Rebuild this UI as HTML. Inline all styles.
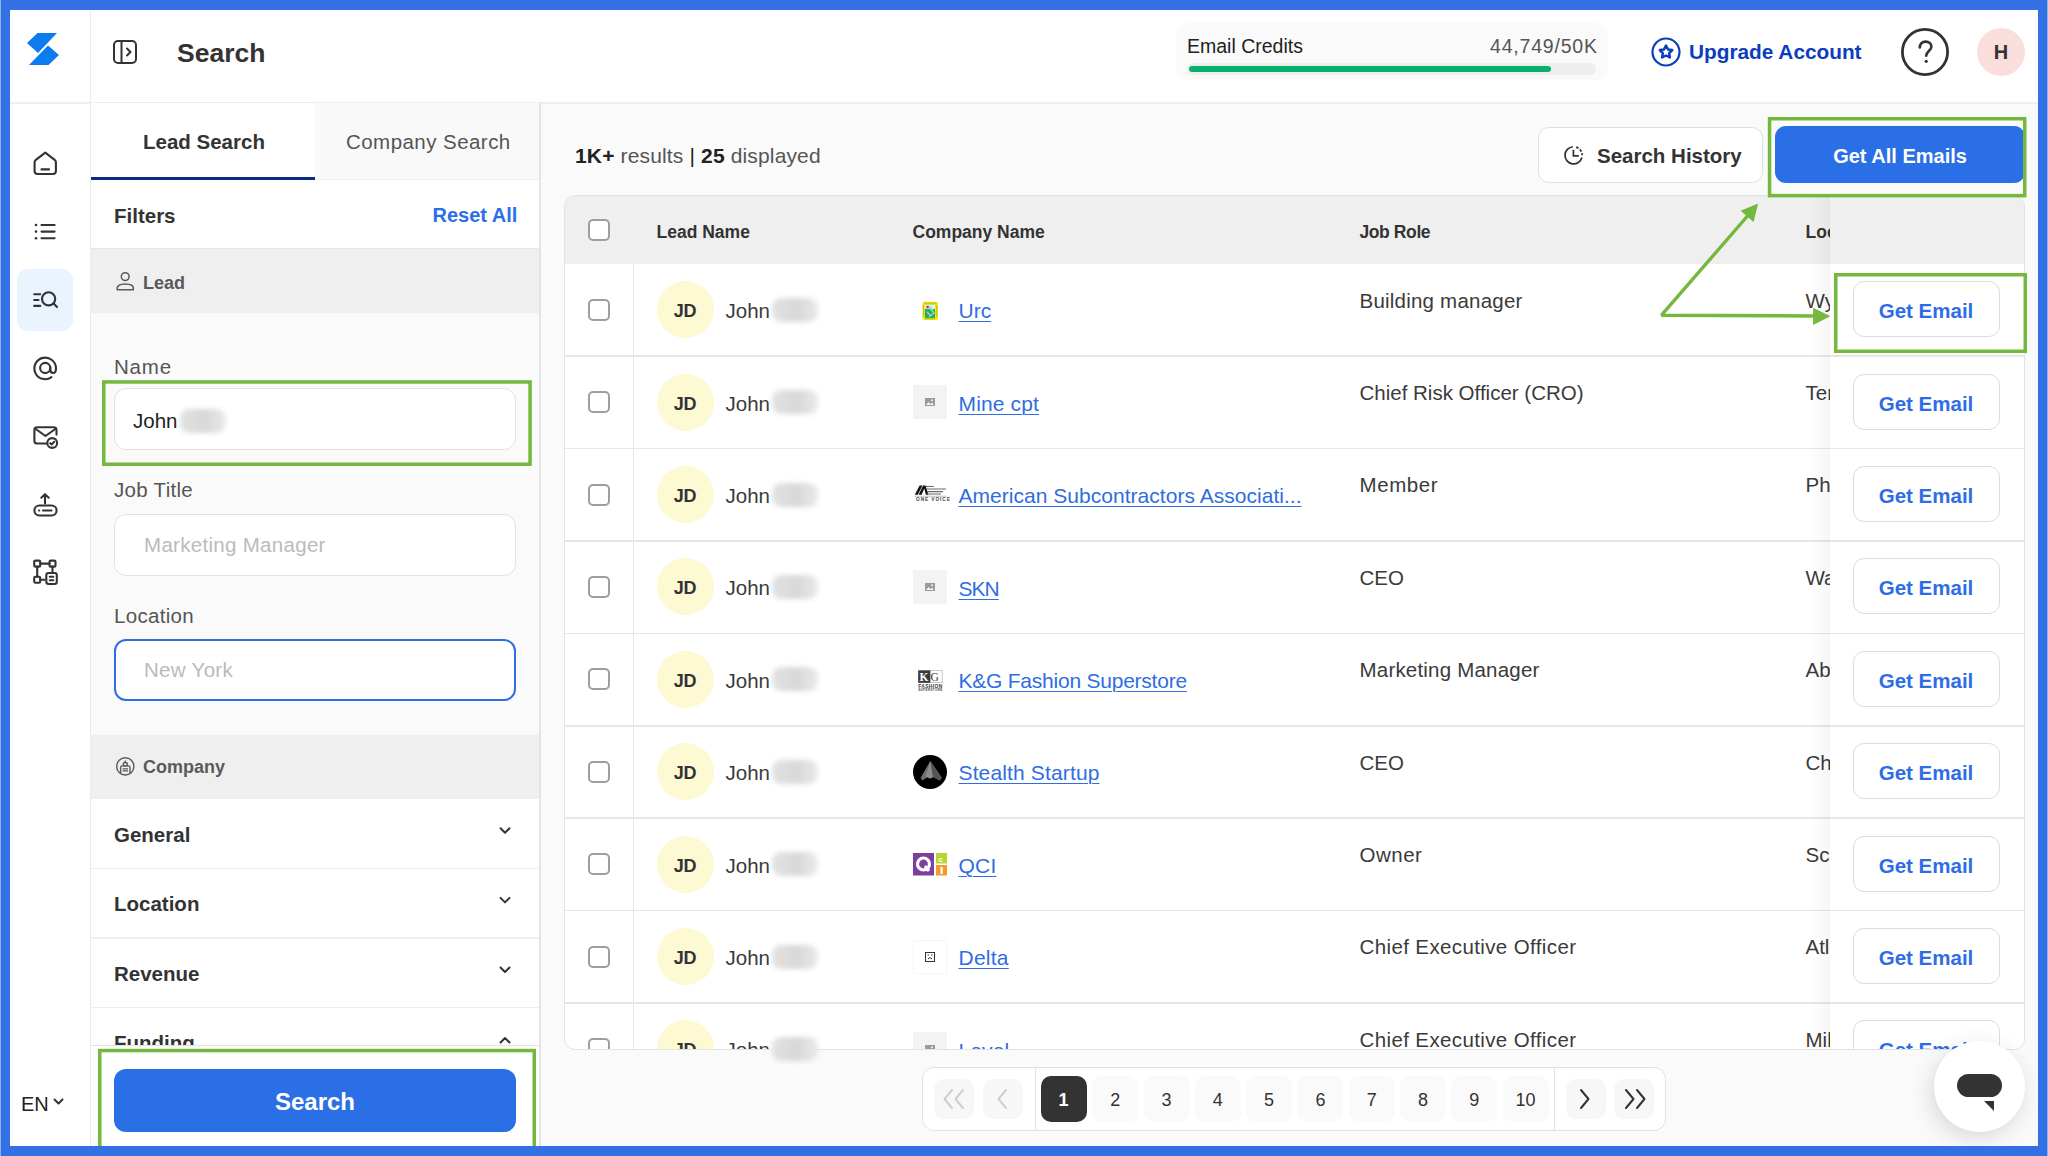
<!DOCTYPE html>
<html><head><meta charset="utf-8">
<style>
*{box-sizing:border-box;margin:0;padding:0}
html,body{width:2048px;height:1156px;overflow:hidden}
body{background:#3370E3;font-family:"Liberation Sans",sans-serif;color:#333;position:relative}
.a{position:absolute}
.t{position:absolute;white-space:nowrap;line-height:1}
.b{font-weight:bold}
svg{position:absolute;overflow:visible}
.chk{position:absolute;width:22px;height:22px;border:2px solid #9E9E9E;border-radius:5px;background:#fff}
.av{position:absolute;width:57px;height:57px;border-radius:50%;background:#FDF9D3;font-weight:bold;font-size:18px;letter-spacing:-0.3px;color:#333;text-align:center;line-height:60px}
.nm{position:absolute;font-size:20.5px;color:#3A3A3A;white-space:nowrap;line-height:1}
.blur{position:absolute;width:40px;height:20px;border-radius:9px;background:linear-gradient(to right,#E2E2E2,#D8D8D8 55%,#EAEAEA);filter:blur(2.8px)}
.lk{position:absolute;font-size:21px;letter-spacing:0.25px;color:#2F6DE1;text-decoration:underline;text-underline-offset:2.5px;text-decoration-thickness:1.2px;white-space:nowrap;line-height:1}
.jr{position:absolute;font-size:20.5px;letter-spacing:0.25px;color:#3A3A3A;white-space:nowrap;line-height:1}
.lc{position:absolute;font-size:20.5px;color:#3A3A3A;white-space:nowrap;line-height:1}
.ge{position:absolute;left:1853px;width:147px;height:56px;border:1.5px solid #DCDCDC;border-radius:11px;background:#fff;color:#2F6DE6;font-weight:bold;font-size:20.5px;text-align:center;line-height:58px}
.sep{position:absolute;left:564px;width:1460px;height:1px;background:#E3E3E3}
.lg{position:absolute;left:913px;width:34px;height:34px}
.pg{position:absolute;top:1076px;width:46px;height:46px;border-radius:10px;background:#FAFAFA;font-size:18px;color:#333;text-align:center;line-height:48px}
.gr{position:absolute;border:3px solid #76B83F}
.acc{position:absolute;left:91px;width:448px;height:70px;background:#fff}
.acc .t{left:23px;top:26px !important;font-size:20.5px;font-weight:bold;color:#333}
</style></head>
<body>
<!-- white app area -->
<div class="a" style="left:10px;top:10px;width:2028px;height:1136px;background:#fff"></div>
<!-- main bg -->
<div class="a" style="left:540px;top:103px;width:1498px;height:1043px;background:#FAFAFA"></div>
<!-- header border -->
<div class="a" style="left:10px;top:102px;width:2028px;height:1.5px;background:#EEEEEE"></div>
<!-- nav divider -->
<div class="a" style="left:90px;top:10px;width:1px;height:1136px;background:#EBEBEB"></div>

<!-- NAV -->
<svg style="left:27px;top:33px" width="32" height="32" viewBox="0 0 32 32"><path d="M10.5 0H30L11 20L0 10Z M21 12.5L32 22L21.5 32H2Z" fill="#0A7CF0"/></svg>
<div class="a" style="left:17px;top:269px;width:56px;height:62px;border-radius:11px;background:#EAF4FE"></div>


<!-- nav icons -->
<svg style="left:0;top:0" width="100" height="600" viewBox="0 0 100 600" fill="none" stroke="#333" stroke-width="2.1" stroke-linecap="round" stroke-linejoin="round">
<path d="M45.3 152.6L55 160.2Q55.9 161 55.9 162.3V171Q55.9 174 52.9 174H37.6Q34.6 174 34.6 171V162.3Q34.6 161 35.5 160.2Z"/>
<path d="M41.5 169.4H49"/>
<circle cx="36" cy="225" r="1.3" fill="#333" stroke="none"/><circle cx="36" cy="231.6" r="1.3" fill="#333" stroke="none"/><circle cx="36" cy="238.3" r="1.3" fill="#333" stroke="none"/>
<path d="M41.5 225H54.6M41.5 231.6H54.6M41.5 238.3H54.6"/>
<path d="M34.2 294.3H40.2M34.2 300H38.5M34.2 305.9H40.2"/>
<circle cx="48.6" cy="298.8" r="6.6"/><path d="M53.6 303.6L57 307"/>
<path d="M50.3 367.5V369.5Q50.3 373 53.3 373Q56 373 56 368.3A10.8 10.8 0 1 0 51.5 377.2"/>
<circle cx="45.2" cy="368" r="5.1"/>
<path d="M56.5 434.6V430Q56.5 427.2 53.7 427.2H37.2Q34.4 427.2 34.4 430V441Q34.4 443.5 37 443.5H46.5"/>
<path d="M35 428.5L45.5 436L56 428.5"/>
<circle cx="52.2" cy="443" r="4.9"/><path d="M50.2 443.2L51.7 444.5L54.2 441.8"/>
<path d="M45 503.5V494.2M41.3 497.7L45 494.2L48.7 497.7"/>
<rect x="34.4" y="505.5" width="22.2" height="10" rx="5"/>
<path d="M39 510.5H39.2M43 510.5H51.5"/>
<rect x="34.2" y="560.6" width="6" height="6" rx="1.2"/><rect x="49.5" y="560.6" width="6" height="6" rx="1.2"/>
<path d="M40.2 563.6H49.5M37.2 566.6V576.8M52.5 566.6V572.5"/>
<rect x="34.2" y="576.8" width="6" height="6" rx="1.2"/>
<rect x="46.3" y="573" width="10.5" height="11" rx="2.2"/>
<path d="M49.8 576.8H53.3M49.8 580.2H53.3M40.2 579.8H44.5"/>
</svg>


<!-- FILTER PANEL -->
<div class="a" style="left:91px;top:103px;width:448px;height:1043px;background:#FAFAFA"></div>
<div class="a" style="left:539px;top:103px;width:1.5px;height:1043px;background:#E4E4E4"></div>
<div class="a" style="left:91px;top:103px;width:224px;height:77px;background:#fff"></div>
<div class="a" style="left:315px;top:103px;width:224px;height:77px;background:#F9F9F9;border-bottom:1.5px solid #EEEEEE"></div>
<div class="a" style="left:91px;top:177px;width:224px;height:3px;background:#0B2A7A"></div>
<div class="t b" style="left:143px;top:132px;font-size:20.5px;color:#333">Lead Search</div>
<div class="t" style="left:346px;top:132px;font-size:20.5px;letter-spacing:0.45px;color:#555">Company Search</div>
<div class="a" style="left:91px;top:180px;width:448px;height:69px;background:#fff;border-bottom:1.5px solid #E6E6E6"></div>
<div class="t b" style="left:114px;top:205.5px;font-size:20.5px;color:#333">Filters</div>
<div class="t b" style="left:432.5px;top:205px;font-size:20px;color:#2A6FE8">Reset All</div>
<div class="a" style="left:91px;top:249px;width:448px;height:64px;background:#EFEFEF"></div>
<svg style="left:115px;top:272px" width="20" height="20" viewBox="0 0 20 20" fill="none" stroke="#5A5A5A" stroke-width="1.5"><circle cx="10.2" cy="4.6" r="3.9"/><path d="M2.3 17.8Q1.2 11.9 10.3 11.9Q19.4 11.9 18.3 17.8Z" stroke-linejoin="round"/></svg>
<div class="t b" style="left:143px;top:273.5px;font-size:18px;color:#5A5A5A">Lead</div>

<div class="t" style="left:114px;top:356.5px;font-size:20.5px;letter-spacing:0.8px;color:#555">Name</div>
<div class="a" style="left:114px;top:388px;width:402px;height:62px;border:1.5px solid #E2E2E2;border-radius:12px;background:#fff"></div>
<div class="t" style="left:133px;top:411px;font-size:20.5px;color:#222">John</div>
<div class="blur" style="left:180px;top:409px;width:46px;height:24px"></div>
<div class="t" style="left:114px;top:480px;font-size:20.5px;letter-spacing:0.3px;color:#555">Job Title</div>
<div class="a" style="left:114px;top:513.5px;width:402px;height:62px;border:1.5px solid #E2E2E2;border-radius:12px;background:#fff"></div>
<div class="t" style="left:144px;top:535.2px;font-size:20.5px;letter-spacing:0.3px;color:#BBBBBB">Marketing Manager</div>
<div class="t" style="left:114px;top:606px;font-size:20.5px;letter-spacing:0.3px;color:#555">Location</div>
<div class="a" style="left:114px;top:638.5px;width:402px;height:62px;border:2px solid #306DE4;border-radius:12px;background:#fff"></div>
<div class="t" style="left:144px;top:660.2px;font-size:20.5px;letter-spacing:0.3px;color:#BBBBBB">New York</div>

<div class="a" style="left:91px;top:735px;width:448px;height:64px;background:#EFEFEF"></div>
<svg style="left:115px;top:757px" width="20" height="20" viewBox="0 0 20 20" fill="none" stroke="#5A5A5A" stroke-width="1.4"><circle cx="10.3" cy="9.4" r="8.6"/><path d="M10.3 3.6V5.6"/><rect x="8.3" y="5.8" width="4" height="3" rx="0.8"/><path d="M5.6 17V10.4Q5.6 8.9 7.1 8.9H13.5Q15 8.9 15 10.4V17"/><path d="M7.6 11.9H13M7.6 13.9H13" stroke-width="1.2"/></svg>
<div class="t b" style="left:143px;top:757.5px;font-size:18px;color:#5A5A5A">Company</div>

<div class="acc" style="top:799px"><div class="t" style="top:27px">General</div></div>
<div class="acc" style="top:868px"><div class="t" style="top:27px">Location</div></div>
<div class="acc" style="top:938px"><div class="t" style="top:27px">Revenue</div></div>
<div class="acc" style="top:1007px"><div class="t" style="top:27px">Funding</div></div>
<div class="a" style="left:91px;top:867.5px;width:448px;height:1.5px;background:#EEEEEE"></div><div class="a" style="left:91px;top:937px;width:448px;height:1.5px;background:#EEEEEE"></div><div class="a" style="left:91px;top:1006.5px;width:448px;height:1.5px;background:#EEEEEE"></div>
<svg style="left:0;top:0" width="540" height="1100" viewBox="0 0 540 1100" fill="none" stroke="#333" stroke-width="2" stroke-linecap="round" stroke-linejoin="round">
<path d="M500.5 828.3L505 832.8L509.5 828.3M500.5 897.9L505 902.4L509.5 897.9M500.5 967.5L505 972L509.5 967.5M500.5 1042.5L505 1038L509.5 1042.5"/>
</svg>
<!-- footer -->
<div class="a" style="left:91px;top:1045px;width:448px;height:101px;background:#fff;border-top:1.5px solid #E2E2E2"></div>
<div class="a" style="left:114px;top:1069px;width:402px;height:63px;border-radius:12px;background:#2B6FE6;color:#fff;font-weight:bold;font-size:24px;text-align:center;line-height:65px">Search</div>
<div class="t" style="left:21px;top:1093.5px;font-size:20px;color:#222">EN</div>
<svg style="left:53px;top:1097px" width="12" height="10" viewBox="0 0 12 10" fill="none" stroke="#333" stroke-width="2" stroke-linecap="round" stroke-linejoin="round"><path d="M1.5 2.5L5.5 6.5L9.5 2.5"/></svg>

<!-- HEADER -->
<svg style="left:113px;top:40px" width="24" height="24" viewBox="0 0 24 24" fill="none" stroke="#333" stroke-width="2"><rect x="1" y="1" width="22" height="22" rx="4"/><path d="M8.5 1V23"/><path d="M14 8.5L17.5 12L14 15.5" stroke-linecap="round" stroke-linejoin="round"/></svg>
<div class="t b" style="left:177px;top:40px;font-size:26.5px;color:#333">Search</div>

<div class="a" style="left:1176px;top:23px;width:432px;height:57px;border-radius:12px;background:#FAFAFA"></div>
<div class="t" style="left:1187px;top:36.5px;font-size:19.5px;color:#222">Email Credits</div>
<div class="t" style="left:1490px;top:36.5px;font-size:19.5px;letter-spacing:0.8px;color:#555">44,749/50K</div>
<div class="a" style="left:1187px;top:63px;width:409px;height:12px;border-radius:6px;background:#EEEEEE"></div>
<div class="a" style="left:1189px;top:66px;width:362px;height:6px;border-radius:3px;background:#07B06D"></div>

<svg style="left:1651px;top:37px" width="30" height="30" viewBox="0 0 30 30" fill="none" stroke="#0B3DBD" stroke-width="2.2"><circle cx="15" cy="15" r="13.5"/><path d="M15 8.6L17 12.4L21.2 13.1L18.2 16.2L18.9 20.5L15 18.5L11.1 20.5L11.8 16.2L8.8 13.1L13 12.4Z" stroke-linejoin="round" stroke-width="2.5"/></svg>
<div class="t b" style="left:1689px;top:41.8px;font-size:20.8px;color:#0B3DBD">Upgrade Account</div>

<svg style="left:1901px;top:28px" width="48" height="48" viewBox="0 0 48 48" fill="none" stroke="#333" stroke-width="2.8"><circle cx="24" cy="24" r="22.6"/><path d="M18.8 19.5C18.8 16 21.2 13.6 24.6 13.6C28 13.6 30.4 15.8 30.4 18.8C30.4 22.6 25.2 23.6 25.2 27.8" stroke-linecap="round" stroke-width="2.6"/><circle cx="25.2" cy="33.3" r="1.6" fill="#333" stroke="none"/></svg>
<div class="a" style="left:1977px;top:28px;width:48px;height:48px;border-radius:50%;background:#F9DEDC;text-align:center;line-height:48px;font-weight:bold;font-size:20px;color:#333">H</div>

<!-- MAIN START -->
<div class="t" style="left:575px;top:144.7px;font-size:21px;letter-spacing:0.15px;color:#555"><b style="color:#222">1K+</b> results <span style="color:#222">|</span> <b style="color:#222">25</b> displayed</div>
<div class="a" style="left:1538px;top:127px;width:225px;height:56px;border:1.5px solid #E0E0E0;border-radius:11px;background:#fff"></div>
<svg style="left:1564px;top:145.5px" width="19" height="19" viewBox="0 0 19 19" fill="none" stroke="#333" stroke-width="1.7" stroke-linecap="butt"><path d="M8.85 0.73A8.6 8.6 0 1 0 17.9 11.5"/><path d="M9.4 4.6V9.9H14" stroke-linecap="square" stroke-linejoin="miter"/><path d="M12.2 1.05A8.6 8.6 0 0 1 18.2 9.3" stroke-dasharray="2.6 1.7" stroke-width="1.8"/></svg>
<div class="t b" style="left:1597px;top:146px;font-size:20.5px;color:#333">Search History</div>
<div class="a" style="left:1775px;top:126px;width:250px;height:57px;border-radius:11px;background:#2B6FE6;color:#fff;font-weight:bold;font-size:20px;text-align:center;line-height:61px">Get All Emails</div>
<div class="a" style="left:563.5px;top:195px;width:1461.0px;height:855px;border:1.5px solid #E3E3E3;border-radius:11px;background:#fff;overflow:hidden">
<div class="a" style="left:-2.0px;top:-1.5px;width:1462px;height:69px;background:#EFEFEF"></div>
<div class="chk" style="left:23.0px;top:22.5px"></div>
<div class="t b" style="left:92.0px;top:27.5px;font-size:17.5px;color:#333">Lead Name</div>
<div class="t b" style="left:348.0px;top:27.5px;font-size:17.5px;color:#333">Company Name</div>
<div class="t b" style="left:795.0px;top:27.5px;font-size:17.5px;letter-spacing:-0.4px;color:#333">Job Role</div>
<div class="t b" style="left:1241.0px;top:27.5px;font-size:17.5px;color:#333">Location</div>
<div class="a" style="left:68.0px;top:67.5px;width:1.5px;height:800px;background:#E6E6E6"></div>
<div class="chk" style="left:23.0px;top:102.7px"></div>
<div class="av" style="left:92.0px;top:85.2px">JD</div>
<div class="nm" style="left:161.0px;top:105.2px">John</div>
<div class="blur" style="left:207.0px;top:101.7px;width:46px;height:24px"></div>
<svg style="left:348.0px;top:96.7px" width="34" height="34" viewBox="0 0 34 34"><rect x="9.4" y="8.8" width="15.6" height="18.3" rx="2.2" fill="#F2E90C"/><path d="M11 10.2H23.4M10.6 12V24M23.8 12V24M12 25.8H22.4" stroke="#9A9A20" stroke-width="0.6"/><rect x="12" y="11.5" width="10" height="13.5" fill="#22AE6E"/><rect x="12" y="11.5" width="10" height="4.5" fill="#E8F4EE"/><path d="M15 13L21 20L16 24M17 13L20 17M14 19L18 23" stroke="#9ED8BC" stroke-width="1.2" fill="none"/><rect x="13.3" y="12.8" width="2.4" height="2.4" fill="#E8283A"/></svg>
<div class="lk" style="left:394.0px;top:104.4px;letter-spacing:0px">Urc</div>
<div class="jr" style="left:795.0px;top:94.5px;letter-spacing:0.22px">Building manager</div>
<div class="lc" style="left:1241.0px;top:94.5px">Wy</div>
<div class="a" style="left:-1.0px;top:159.4px;width:1460px;height:1.5px;background:#E6E6E6"></div>
<div class="chk" style="left:23.0px;top:195.1px"></div>
<div class="av" style="left:92.0px;top:177.6px">JD</div>
<div class="nm" style="left:161.0px;top:197.6px">John</div>
<div class="blur" style="left:207.0px;top:194.1px;width:46px;height:24px"></div>
<div class="a" style="left:348.0px;top:189.1px;width:34px;height:34px;background:#F3F3F3"></div>
<svg style="left:360.0px;top:202.1px" width="10" height="8" viewBox="0 0 10 8"><rect width="10" height="8" fill="#9A9A9A"/><path d="M1 7L3.5 4L5.5 6L7 4.8L9 7Z" fill="#F3F3F3"/><circle cx="7" cy="2.3" r="1" fill="#F3F3F3"/></svg>
<div class="lk" style="left:394.0px;top:196.8px;letter-spacing:0.14px">Mine cpt</div>
<div class="jr" style="left:795.0px;top:186.9px;letter-spacing:0px">Chief Risk Officer (CRO)</div>
<div class="lc" style="left:1241.0px;top:186.9px">Ter</div>
<div class="a" style="left:-1.0px;top:251.8px;width:1460px;height:1.5px;background:#E6E6E6"></div>
<div class="chk" style="left:23.0px;top:287.5px"></div>
<div class="av" style="left:92.0px;top:270.0px">JD</div>
<div class="nm" style="left:161.0px;top:290.0px">John</div>
<div class="blur" style="left:207.0px;top:286.5px;width:46px;height:24px"></div>
<svg style="left:348.0px;top:281.5px" width="34" height="34" viewBox="0 0 34 34"><path d="M1.8 16.8L6.6 7.6L9.4 7.6L4.8 16.8Z M5.6 16.8L10 7.6L12.6 7.6L8.6 16.8Z M10.4 7.6L12.6 7.6L15.4 16.8L12.9 16.8Z" fill="#151515"/><path d="M12.6 8.5H21M13.5 11H33M14 13.6H30M14.6 16H28" stroke="#6A6A6A" stroke-width="1.1"/><rect x="1.5" y="17.6" width="32" height="1.4" fill="#D2D2D2"/><text x="3" y="23.3" font-size="4.8" font-weight="bold" fill="#444" font-family="Liberation Sans" letter-spacing="0.9">ONE VOICE</text></svg>
<div class="lk" style="left:394.0px;top:289.2px;letter-spacing:0.03px">American Subcontractors Associati...</div>
<div class="jr" style="left:795.0px;top:279.3px;letter-spacing:0.6px">Member</div>
<div class="lc" style="left:1241.0px;top:279.3px">Ph</div>
<div class="a" style="left:-1.0px;top:344.2px;width:1460px;height:1.5px;background:#E6E6E6"></div>
<div class="chk" style="left:23.0px;top:379.9px"></div>
<div class="av" style="left:92.0px;top:362.4px">JD</div>
<div class="nm" style="left:161.0px;top:382.4px">John</div>
<div class="blur" style="left:207.0px;top:378.9px;width:46px;height:24px"></div>
<div class="a" style="left:348.0px;top:373.9px;width:34px;height:34px;background:#F3F3F3"></div>
<svg style="left:360.0px;top:386.9px" width="10" height="8" viewBox="0 0 10 8"><rect width="10" height="8" fill="#9A9A9A"/><path d="M1 7L3.5 4L5.5 6L7 4.8L9 7Z" fill="#F3F3F3"/><circle cx="7" cy="2.3" r="1" fill="#F3F3F3"/></svg>
<div class="lk" style="left:394.0px;top:381.6px;letter-spacing:-1.0px">SKN</div>
<div class="jr" style="left:795.0px;top:371.7px;letter-spacing:0px">CEO</div>
<div class="lc" style="left:1241.0px;top:371.7px">Wa</div>
<div class="a" style="left:-1.0px;top:436.6px;width:1460px;height:1.5px;background:#E6E6E6"></div>
<div class="chk" style="left:23.0px;top:472.3px"></div>
<div class="av" style="left:92.0px;top:454.8px">JD</div>
<div class="nm" style="left:161.0px;top:474.8px">John</div>
<div class="blur" style="left:207.0px;top:471.3px;width:46px;height:24px"></div>
<svg style="left:348.0px;top:466.3px" width="34" height="34" viewBox="0 0 34 34"><rect x="5.4" y="8.6" width="23.8" height="12" fill="#fff" stroke="#BDBDBD" stroke-width="0.8"/><rect x="5.2" y="8.4" width="12.2" height="12.4" fill="#3A3A3A"/><text x="6.6" y="19" font-size="11.5" font-weight="bold" fill="#fff" font-family="Liberation Serif">K</text><text x="17.6" y="19" font-size="11.5" fill="#3A3A3A" font-family="Liberation Serif">G</text><text x="5.2" y="25.6" font-size="4.9" font-weight="bold" fill="#333" font-family="Liberation Sans" textLength="24">FASHION</text><text x="5.2" y="29.2" font-size="3" font-weight="bold" fill="#444" font-family="Liberation Sans" textLength="24">SUPERSTORE</text></svg>
<div class="lk" style="left:394.0px;top:474.0px;letter-spacing:-0.23px">K&amp;G Fashion Superstore</div>
<div class="jr" style="left:795.0px;top:464.1px;letter-spacing:0.2px">Marketing Manager</div>
<div class="lc" style="left:1241.0px;top:464.1px">Ab</div>
<div class="a" style="left:-1.0px;top:529.0px;width:1460px;height:1.5px;background:#E6E6E6"></div>
<div class="chk" style="left:23.0px;top:564.7px"></div>
<div class="av" style="left:92.0px;top:547.2px">JD</div>
<div class="nm" style="left:161.0px;top:567.2px">John</div>
<div class="blur" style="left:207.0px;top:563.7px;width:46px;height:24px"></div>
<svg style="left:348.0px;top:558.7px" width="34" height="34" viewBox="0 0 34 34"><circle cx="17" cy="17" r="17" fill="#000"/><path d="M17.3 6L7.6 22.8L9.5 25.4L14.6 21.9L17.3 23.5L20.1 21.9L26.8 25.4L28.8 22.8Z" fill="#6E6E6E"/><path d="M17.3 6L12.5 21.8L17.3 23.5L20.1 21.9Z" fill="#8C8C8C"/><path d="M17.3 6L20.1 21.9L26.8 25.4L28.8 22.8Z" fill="#555"/></svg>
<div class="lk" style="left:394.0px;top:566.4px;letter-spacing:0.14px">Stealth Startup</div>
<div class="jr" style="left:795.0px;top:556.5px;letter-spacing:0px">CEO</div>
<div class="lc" style="left:1241.0px;top:556.5px">Ch</div>
<div class="a" style="left:-1.0px;top:621.4px;width:1460px;height:1.5px;background:#E6E6E6"></div>
<div class="chk" style="left:23.0px;top:657.1px"></div>
<div class="av" style="left:92.0px;top:639.6px">JD</div>
<div class="nm" style="left:161.0px;top:659.6px">John</div>
<div class="blur" style="left:207.0px;top:656.1px;width:46px;height:24px"></div>
<svg style="left:348.0px;top:656.6px" width="34" height="23" viewBox="0 0 34 23"><rect width="21" height="22.5" fill="#7B3F9E"/><circle cx="10.5" cy="11" r="6" fill="none" stroke="#fff" stroke-width="3.2"/><path d="M12 13L16 18" stroke="#fff" stroke-width="3.2"/><rect x="23" y="0" width="11" height="10.5" fill="#B7D433"/><rect x="23" y="12" width="11" height="10.5" fill="#F39A2C"/><text x="25.5" y="8.5" font-size="8" font-weight="bold" fill="#fff" font-family="Liberation Sans">c</text><rect x="27.5" y="14" width="2.2" height="7" fill="#fff"/></svg>
<div class="lk" style="left:394.0px;top:658.8px;letter-spacing:0.2px">QCI</div>
<div class="jr" style="left:795.0px;top:648.9px;letter-spacing:0.5px">Owner</div>
<div class="lc" style="left:1241.0px;top:648.9px">Sc</div>
<div class="a" style="left:-1.0px;top:713.8px;width:1460px;height:1.5px;background:#E6E6E6"></div>
<div class="chk" style="left:23.0px;top:749.5px"></div>
<div class="av" style="left:92.0px;top:732.0px">JD</div>
<div class="nm" style="left:161.0px;top:752.0px">John</div>
<div class="blur" style="left:207.0px;top:748.5px;width:46px;height:24px"></div>
<div class="a" style="left:348.0px;top:743.5px;width:34px;height:34px;background:#fff;border:1px solid #F6F6F6"></div>
<svg style="left:360.0px;top:755.5px" width="10" height="10" viewBox="0 0 10 10" fill="none" stroke="#333" stroke-width="1"><rect x="0.5" y="0.5" width="9" height="9"/><path d="M2.5 3H4M6 3H7.5M3 7L5 5.5L7 7"/></svg>
<div class="lk" style="left:394.0px;top:751.2px;letter-spacing:0.25px">Delta</div>
<div class="jr" style="left:795.0px;top:741.3px;letter-spacing:0.38px">Chief Executive Officer</div>
<div class="lc" style="left:1241.0px;top:741.3px">Atl</div>
<div class="a" style="left:-1.0px;top:806.2px;width:1460px;height:1.5px;background:#E6E6E6"></div>
<div class="chk" style="left:23.0px;top:841.9px"></div>
<div class="av" style="left:92.0px;top:824.4px">JD</div>
<div class="nm" style="left:161.0px;top:844.4px">John</div>
<div class="a" style="left:348.0px;top:835.9px;width:34px;height:34px;background:#F3F3F3"></div>
<svg style="left:360.0px;top:848.9px" width="10" height="8" viewBox="0 0 10 8"><rect width="10" height="8" fill="#9A9A9A"/><path d="M1 7L3.5 4L5.5 6L7 4.8L9 7Z" fill="#F3F3F3"/><circle cx="7" cy="2.3" r="1" fill="#F3F3F3"/></svg>
<div class="lk" style="left:394.0px;top:843.6px;letter-spacing:0.1px">Level</div>
<div class="jr" style="left:795.0px;top:833.7px;letter-spacing:0.38px">Chief Executive Officer</div>
<div class="lc" style="left:1241.0px;top:833.7px">Mil</div>
<div class="a" style="left:1245.0px;top:0.5px;width:20px;height:860px;background:linear-gradient(to right,rgba(0,0,0,0),rgba(0,0,0,0.035))"></div>
<div class="a" style="left:1265.0px;top:-1.5px;width:200px;height:69px;background:#EFEFEF"></div>
<div class="a" style="left:1265.0px;top:67.5px;width:200px;height:800px;background:#fff"></div>
<div class="ge" style="left:1288.0px;top:85.2px">Get Email</div>
<div class="a" style="left:1265.0px;top:159.4px;width:200px;height:1.5px;background:#E6E6E6"></div>
<div class="ge" style="left:1288.0px;top:177.6px">Get Email</div>
<div class="a" style="left:1265.0px;top:251.8px;width:200px;height:1.5px;background:#E6E6E6"></div>
<div class="ge" style="left:1288.0px;top:270.0px">Get Email</div>
<div class="a" style="left:1265.0px;top:344.2px;width:200px;height:1.5px;background:#E6E6E6"></div>
<div class="ge" style="left:1288.0px;top:362.4px">Get Email</div>
<div class="a" style="left:1265.0px;top:436.6px;width:200px;height:1.5px;background:#E6E6E6"></div>
<div class="ge" style="left:1288.0px;top:454.8px">Get Email</div>
<div class="a" style="left:1265.0px;top:529.0px;width:200px;height:1.5px;background:#E6E6E6"></div>
<div class="ge" style="left:1288.0px;top:547.2px">Get Email</div>
<div class="a" style="left:1265.0px;top:621.4px;width:200px;height:1.5px;background:#E6E6E6"></div>
<div class="ge" style="left:1288.0px;top:639.6px">Get Email</div>
<div class="a" style="left:1265.0px;top:713.8px;width:200px;height:1.5px;background:#E6E6E6"></div>
<div class="ge" style="left:1288.0px;top:732.0px">Get Email</div>
<div class="a" style="left:1265.0px;top:806.2px;width:200px;height:1.5px;background:#E6E6E6"></div>
<div class="ge" style="left:1288.0px;top:824.4px">Get Email</div>
</div>
<div class="blur" style="left:772px;top:1037.4px;width:46px;height:24px"></div>
<div class="a" style="left:922px;top:1067px;width:744px;height:64px;border:1.5px solid #E2E2E2;border-radius:12px;background:#fff"></div>
<div class="a" style="left:1034.5px;top:1067px;width:1px;height:64px;background:#E2E2E2"></div>
<div class="a" style="left:1553.5px;top:1067px;width:1px;height:64px;background:#E2E2E2"></div>
<div class="a" style="left:934px;top:1079px;width:40px;height:40px;border-radius:10px;background:#F7F7F7"></div>
<div class="a" style="left:983px;top:1079px;width:40px;height:40px;border-radius:10px;background:#F7F7F7"></div>
<div class="a" style="left:1566px;top:1079px;width:40px;height:40px;border-radius:10px;background:#F7F7F7"></div>
<div class="a" style="left:1614px;top:1079px;width:40px;height:40px;border-radius:10px;background:#F7F7F7"></div>
<svg style="left:0;top:0" width="2048" height="1156" viewBox="0 0 2048 1156" fill="none" stroke-linecap="round" stroke-linejoin="round" stroke-width="2"><path d="M952 1090L944.5 1099L952 1108M963 1090L955.5 1099L963 1108" stroke="#CFCFCF"/><path d="M1006 1090L998.5 1099L1006 1108" stroke="#CFCFCF"/><path d="M1581 1090L1588.5 1099L1581 1108" stroke="#333"/><path d="M1626 1090L1633.5 1099L1626 1108M1637 1090L1644.5 1099L1637 1108" stroke="#333"/></svg>
<div class="pg" style="left:1040.6px;background:#333;color:#fff;font-weight:bold">1</div>
<div class="pg" style="left:1092.2px">2</div>
<div class="pg" style="left:1143.5px">3</div>
<div class="pg" style="left:1194.8px">4</div>
<div class="pg" style="left:1246.1px">5</div>
<div class="pg" style="left:1297.4px">6</div>
<div class="pg" style="left:1348.7px">7</div>
<div class="pg" style="left:1400.0px">8</div>
<div class="pg" style="left:1451.3px">9</div>
<div class="pg" style="left:1502.6px">10</div>
<div class="a" style="left:1934px;top:1041px;width:91px;height:91px;border-radius:50%;background:#fff;box-shadow:-3px 6px 22px rgba(30,50,50,0.16)"></div>
<div class="a" style="left:1957px;top:1074px;width:45px;height:23px;border-radius:12px;background:#333"></div>
<svg style="left:1984px;top:1101px" width="10" height="10" viewBox="0 0 10 10"><path d="M0 0H10V10Z" fill="#333"/></svg>
<svg style="left:0;top:0" width="2048" height="1156" viewBox="0 0 2048 1156" fill="none" stroke="#74B83D" stroke-width="3.5"><rect x="103.75" y="381.95" width="426.30" height="82.30"/><rect x="99.75" y="1050.55" width="434.50" height="117.70"/><rect x="1769.55" y="118.75" width="255.20" height="76.90"/><rect x="1835.75" y="274.75" width="189.50" height="76.50"/><path d="M1747.5 216L1661.5 315.2L1815 316" stroke-width="3.4" stroke-linejoin="bevel"/><path d="M1758.2 203.4L1740.6 210.7L1753.5 222Z M1830.4 316.2L1813.1 307.7L1813.1 325.1Z" fill="#74B83D" stroke="none"/></svg>
<div class="a" style="left:0;top:0;width:2048px;height:10px;background:#3370E3"></div>
<div class="a" style="left:0;top:1146px;width:2048px;height:10px;background:#3370E3"></div>
<div class="a" style="left:0;top:0;width:10px;height:1156px;background:#3370E3"></div>
<div class="a" style="left:2038px;top:0;width:10px;height:1156px;background:#3370E3"></div>
<div class="a" style="left:0;top:0;width:1px;height:1156px;background:#8FB1EE"></div><div class="a" style="left:2047px;top:0;width:1px;height:1156px;background:#8FB1EE"></div>
<!-- MAIN END -->
</body></html>
